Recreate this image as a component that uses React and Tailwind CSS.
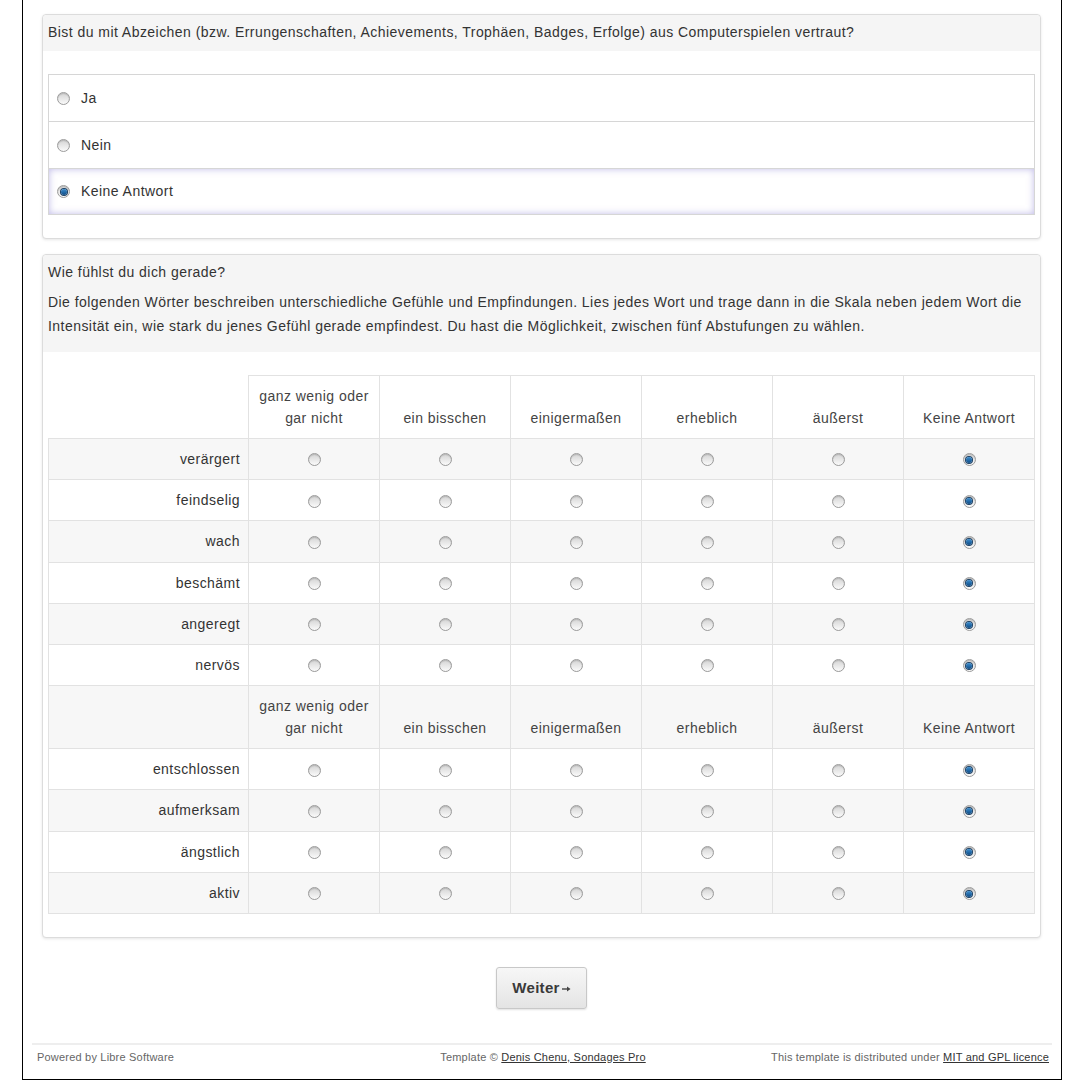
import React from "react";

const COLS = ["ganz wenig oder gar nicht", "ein bisschen", "einigermaßen", "erheblich", "äußerst", "Keine Antwort"];
const ROWS_A = ["verärgert", "feindselig", "wach", "beschämt", "angeregt", "nervös"];
const ROWS_B = ["entschlossen", "aufmerksam", "ängstlich", "aktiv"];

const Radio = ({ checked }) => (
  <span className="inline-flex w-[13px] h-[13px] rounded-full border border-[#9c9c9c] bg-linear-to-b from-[#d4d4d4] to-[#fafafa] items-center justify-center align-middle shadow-[inset_0_1px_1px_rgba(0,0,0,0.15)]">
    {checked && <span className="w-[6px] h-[6px] rounded-full bg-linear-to-b from-[#3d8fd0] to-[#0d4c86] shadow-[0_0_0_1px_#1b3f63]" />}
  </span>
);

const HeaderRow = ({ shaded }) => (
  <tr className={shaded ? "bg-[#f7f7f7]" : ""}>
    <td className={shaded ? "border border-[#e2e2e2]" : ""} />
    {COLS.map((c) => (
      <th
        key={c}
        className="border border-[#e2e2e2] font-normal text-center align-bottom leading-[22px] px-2 pt-[9px] pb-[9px] text-[#444]"
      >
        {c}
      </th>
    ))}
  </tr>
);

const BodyRow = ({ label, shaded }) => (
  <tr className={shaded ? "bg-[#f7f7f7]" : "bg-white"}>
    <th className="border border-[#e2e2e2] font-normal text-right pr-2 h-[41.2px] leading-[22px] text-[#333]">{label}</th>
    {COLS.map((c, i) => (
      <td key={c} className="border border-[#e2e2e2] text-center h-[41.2px]">
        <Radio checked={i === 5} />
      </td>
    ))}
  </tr>
);

const Option = ({ label, checked, last }) => (
  <div
    className={
      "flex items-center h-[47px] border-x border-t border-[#d6d6d6] pl-2 " +
      (last ? "border-b shadow-[inset_0_0_7px_rgba(130,120,210,0.5)] border-[#cccce0]" : "")
    }
  >
    <Radio checked={checked} />
    <span className="ml-[11px]">{label}</span>
  </div>
);

export default function App() {
  return (
    <div className="bg-white min-h-[1091px] text-[14px] text-[#333] tracking-[0.45px] font-['Liberation_Sans',Arial,sans-serif]">
      <div className="ml-[22px] w-[1040px] border-x border-b border-black pl-[19px] pr-[20px] pt-[14px]">
        {/* Question 1 */}
        <div className="border border-[#dcdcdc] rounded-[4px] shadow-[0_1px_3px_rgba(0,0,0,0.1)] bg-white">
          <div className="bg-[#f5f5f5] px-[5px] pt-[7px] pb-[9px] leading-[20px] rounded-t-[4px]">
            Bist du mit Abzeichen (bzw. Errungenschaften, Achievements, Trophäen, Badges, Erfolge) aus Computerspielen vertraut?
          </div>
          <div className="px-[5px] pt-[23px] pb-[23px]">
            <Option label="Ja" />
            <Option label="Nein" />
            <Option label="Keine Antwort" checked last />
          </div>
        </div>

        {/* Question 2 */}
        <div className="mt-[15px] border border-[#dcdcdc] rounded-[4px] shadow-[0_1px_3px_rgba(0,0,0,0.1)] bg-white">
          <div className="bg-[#f5f5f5] px-[5px] pt-[7px] pb-[14px] rounded-t-[4px]">
            <div className="leading-[20px]">Wie fühlst du dich gerade?</div>
            <p className="mt-[8px] leading-[24px]">
              Die folgenden Wörter beschreiben unterschiedliche Gefühle und Empfindungen. Lies jedes Wort und trage dann in die Skala neben jedem Wort die Intensität ein, wie stark du jenes Gefühl gerade empfindest. Du hast die Möglichkeit, zwischen fünf Abstufungen zu wählen.
            </p>
          </div>
          <div className="px-[5px] pt-[23px] pb-[23px]">
            <table className="w-full table-fixed border-collapse">
              <colgroup>
                <col className="w-[200px]" />
                <col />
                <col />
                <col />
                <col />
                <col />
                <col />
              </colgroup>
              <tbody>
                <HeaderRow />
                {ROWS_A.map((r, i) => (
                  <BodyRow key={r} label={r} shaded={i % 2 === 0} />
                ))}
                <HeaderRow shaded />
                {ROWS_B.map((r, i) => (
                  <BodyRow key={r} label={r} shaded={i % 2 === 1} />
                ))}
              </tbody>
            </table>
          </div>
        </div>

        {/* Next button */}
        <div className="flex justify-center mt-[29px]">
          <button className="w-[91px] h-[42px] border border-[#c8c8c8] rounded-[3px] bg-linear-to-b from-[#f7f7f7] to-[#e4e4e4] shadow-[0_1px_2px_rgba(0,0,0,0.12)] font-bold text-[15px] tracking-[0.3px] text-[#3a3a3a] flex items-center justify-center">
            Weiter
            <svg width="9" height="6" viewBox="0 0 9 6" className="ml-[2px] mt-[2px]">
              <path d="M0 3h6" stroke="#444" strokeWidth="1.4" />
              <path d="M5 0.5L8.5 3L5 5.5z" fill="#444" />
            </svg>
          </button>
        </div>

        {/* Footer */}
        <div className="mt-[34px] -ml-[10px] -mr-[11px] border-t-2 border-[#eeeeee] grid grid-cols-3 items-center px-[5px] pr-[3px] h-[26px] text-[11px] tracking-[0.2px] text-[#666]">
          <span>Powered by Libre Software</span>
          <span className="text-center">
            Template © <span className="underline text-[#333]">Denis Chenu, Sondages Pro</span>
          </span>
          <span className="text-right whitespace-nowrap">
            This template is distributed under <span className="underline text-[#333]">MIT and GPL licence</span>
          </span>
        </div>
        <div className="h-[10px]" />
      </div>
    </div>
  );
}
